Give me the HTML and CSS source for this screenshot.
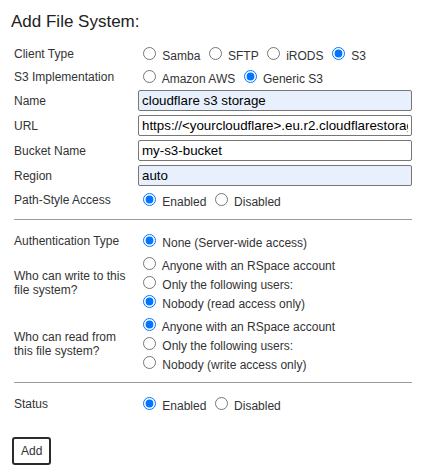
FILE: index.html
```html
<!DOCTYPE html>
<html lang="en">
<head>
    <meta charset="UTF-8">
    <meta name="viewport" content="width=device-width, initial-scale=1.0">
    <title>Add File System</title>
    <link rel="stylesheet" href="styles.css">
</head>
<body>
    <div class="page">
        <h3 class="title">Add File System:</h3>

        <form class="fs-form" onsubmit="return false;">
            <div class="fs-label">Client Type</div>
            <div class="fs-field">
                <input type="radio" name="clientType" value="samba"> Samba
                <input type="radio" name="clientType" value="sftp"> SFTP
                <input type="radio" name="clientType" value="irods"> iRODS
                <input type="radio" name="clientType" value="s3" checked> S3
            </div>

            <div class="fs-label">S3 Implementation</div>
            <div class="fs-field">
                <input type="radio" name="s3Impl" value="aws"> Amazon AWS
                <input type="radio" name="s3Impl" value="generic" checked> Generic S3
            </div>

            <div class="fs-label">Name</div>
            <div class="fs-field">
                <input type="text" class="text-input autofilled" value="cloudflare s3 storage">
            </div>

            <div class="fs-label">URL</div>
            <div class="fs-field">
                <input type="text" class="text-input" value="https://<yourcloudflare>.eu.r2.cloudflarestorage.com">
            </div>

            <div class="fs-label">Bucket Name</div>
            <div class="fs-field">
                <input type="text" class="text-input" value="my-s3-bucket">
            </div>

            <div class="fs-label">Region</div>
            <div class="fs-field">
                <input type="text" class="text-input autofilled" value="auto">
            </div>

            <div class="fs-label">Path-Style Access</div>
            <div class="fs-field">
                <input type="radio" name="pathStyle" value="enabled" checked> Enabled
                <input type="radio" name="pathStyle" value="disabled"> Disabled
            </div>

            <hr class="divider">

            <div class="fs-label">Authentication Type</div>
            <div class="fs-field">
                <input type="radio" name="authType" value="none" checked> None (Server-wide access)
            </div>

            <div class="fs-label">Who can write to this file system?</div>
            <div class="fs-field">
                <div class="option"><input type="radio" name="writeAccess" value="all"> Anyone with an RSpace account</div>
                <div class="option"><input type="radio" name="writeAccess" value="users"> Only the following users:</div>
                <div class="option"><input type="radio" name="writeAccess" value="none" checked> Nobody (read access only)</div>
            </div>

            <div class="fs-label">Who can read from this file system?</div>
            <div class="fs-field">
                <div class="option"><input type="radio" name="readAccess" value="all" checked> Anyone with an RSpace account</div>
                <div class="option"><input type="radio" name="readAccess" value="users"> Only the following users:</div>
                <div class="option"><input type="radio" name="readAccess" value="none"> Nobody (write access only)</div>
            </div>

            <hr class="divider">

            <div class="fs-label">Status</div>
            <div class="fs-field">
                <input type="radio" name="status" value="enabled" checked> Enabled
                <input type="radio" name="status" value="disabled"> Disabled
            </div>
        </form>

        <button type="button" class="add-btn">Add</button>
    </div>
</body>
</html>
```

FILE: styles.css
```css
body {
    margin: 0;
    font-family: "Liberation Sans", Arial, sans-serif;
    font-size: 12px;
    color: #333;
    background-color: #fff;
}
.page {
    padding: 12px 0 0 12px;
}
.title {
    margin: 0 0 10px -1px;
    font-size: 17px;
    font-weight: normal;
    color: #222;
}
.fs-form {
    display: grid;
    grid-template-columns: 124px 274px;
    align-items: center;
    padding-left: 2px;
}
.fs-label,
.fs-field {
    padding: 2px 0;
}
.fs-label {
    padding-right: 8px;
}
.option {
    height: 19px;
}
.text-input {
    display: block;
    width: 100%;
    height: 21px;
    box-sizing: border-box;
    padding: 2px 3px;
    border: 1px solid #767676;
    border-radius: 2px;
    font-family: "Liberation Sans", Arial, sans-serif;
    font-size: 13.333px;
    color: #000;
    background-color: #fff;
}
.text-input.autofilled {
    background-color: #e8f0fe;
}
.divider {
    grid-column: 1 / -1;
    width: 100%;
    margin: 8px 0 9px;
    border: 0;
    border-top: 1px solid #9a9a9a;
}
.add-btn {
    margin-top: 22px;
    padding: 5px 7px;
    font-family: "Liberation Sans", Arial, sans-serif;
    font-size: 12px;
    color: #333;
    background-color: #fff;
    border: 2px solid #2b2b2b;
    border-radius: 3px;
    cursor: pointer;
}
.add-btn:hover {
    background-color: #f2f2f2;
}
```
